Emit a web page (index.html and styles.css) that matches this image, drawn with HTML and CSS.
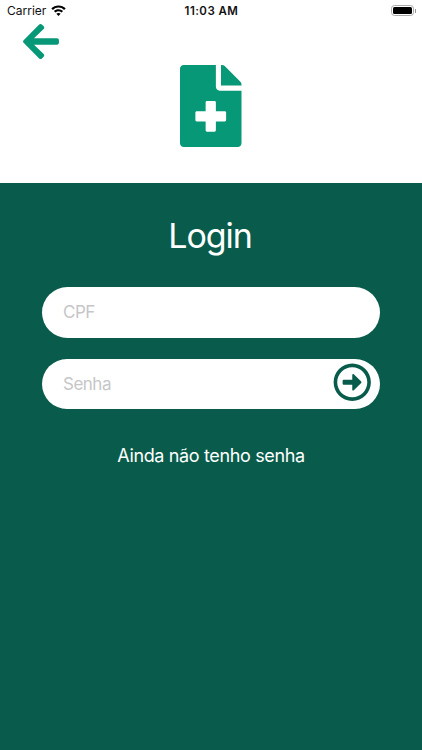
FILE: index.html
```html
<!DOCTYPE html>
<html lang="pt-BR">
<head>
<meta charset="utf-8">
<title>Login</title>
<link rel="stylesheet" href="styles.css">
</head>
<body>
<header class="top">
  <div class="status">
    <div class="carrier"><span class="carrier-name">Carrier</span>
      <svg class="wifi" viewBox="0 0 16 12"><path d="M8 0C5 0 2.300 1.100.3 3.100L2 4.800a8.500 8.500 0 0 1 12 0l1.700-1.700C13.700 1.100 11 0 8 0zM8 4.100c-1.900 0-3.600.7-4.900 1.900l1.700 1.700a4.600 4.600 0 0 1 6.400 0L12.900 6A7.100 7.100 0 0 0 8 4.100zM8 8.100c-.9 0-1.700.3-2.300.9L8 11.400 10.300 9c-.6-.6-1.400-.9-2.300-.9z"/></svg>
    </div>
    <time class="clock">11:03 AM</time>
    <div class="battery"><span class="cell"></span><span class="tip"></span></div>
  </div>
  <a class="back" aria-label="Voltar"><svg viewBox="0 0 448 512"><path d="M257.500 445.100l-22.200 22.200c-9.400 9.400-24.600 9.400-33.900 0L7 273c-9.400-9.400-9.400-24.600 0-33.900L201.400 44.700c9.400-9.400 24.600-9.400 33.900 0l22.200 22.200c9.500 9.500 9.300 25-.4 34.300L136.600 216H424c13.300 0 24 10.700 24 24v32c0 13.300-10.700 24-24 24H136.600l120.500 114.800c9.800 9.300 10 24.800.4 34.300z"/></svg></a>
  <svg class="logo" viewBox="0 0 384 512"><path d="M377 105L279.100 7c-4.500-4.500-10.600-7-17-7H256v128h128v-6.100c0-6.300-2.500-12.400-7-16.900zm-153 31V0H24C10.700 0 0 10.700 0 24v464c0 13.300 10.700 24 24 24h336c13.300 0 24-10.700 24-24V160H248c-13.200 0-24-10.800-24-24zm64 160v48c0 4.400-3.600 8-8 8h-56v56c0 4.400-3.600 8-8 8h-48c-4.400 0-8-3.600-8-8v-56h-56c-4.400 0-8-3.600-8-8v-48c0-4.400 3.600-8 8-8h56v-56c0-4.400 3.600-8 8-8h48c4.400 0 8 3.600 8 8v56h56c4.400 0 8 3.600 8 8z"/></svg>
</header>
<main class="panel">
  <h1 class="title">Login</h1>
  <div class="field"><span class="hint">CPF</span></div>
  <div class="field"><span class="hint">Senha</span>
    <svg class="go" viewBox="0 0 512 512"><path d="M504 256C504 119 393 8 256 8S8 119 8 256s111 248 248 248 248-111 248-248zm-448 0c0-110.500 89.500-200 200-200s200 89.500 200 200-89.500 200-200 200S56 366.500 56 256zm72 20v-40c0-6.600 5.400-12 12-12h116v-67c0-10.700 12.900-16 20.500-8.500l99 99c4.700 4.700 4.700 12.300 0 17l-99 99c-7.600 7.600-20.500 2.200-20.500-8.500v-67H140c-6.600 0-12-5.400-12-12z"/></svg>
  </div>
  <a class="signup">Ainda não tenho senha</a>
</main>
</body>
</html>
```
FILE: styles.css
```css
* { box-sizing: border-box; }
body {
  margin: 0;
  height: 750px;
  display: flex;
  flex-direction: column;
  font-family: Inter, "Liberation Sans", sans-serif;
  background: #fff;
}
svg { display: block; }
.top { height: 183px; flex: none; }
.status {
  height: 21px;
  padding: 0 6px 0 7px;
  display: grid;
  grid-template-columns: 1fr auto 1fr;
  align-items: center;
  color: #111;
}
.carrier { display: flex; align-items: center; gap: 5px; }
.carrier-name { font-size: 12px; line-height: 21px; }
.wifi { width: 15px; height: 12px; fill: #000; }
.clock { font-size: 11.5px; font-weight: 600; line-height: 19px; letter-spacing: 0.45px; padding-top: 2px; }
.battery { display: flex; align-items: center; justify-content: flex-end; gap: 1px; }
.cell {
  width: 23px;
  height: 11px;
  border: 1px solid #aaa;
  border-radius: 3.5px;
  padding: 1px;
  background: #000 content-box;
}
.tip { width: 1px; height: 4px; background: #999; }
.back { display: block; width: 36px; margin: -0.5px 0 0 23px; }
.back svg { width: 36px; height: 41px; fill: #079877; }
.logo { width: 61.5px; height: 82px; margin: 3.8px auto 0; fill: #079877; }
.panel {
  flex: 1;
  display: flex;
  flex-direction: column;
  align-items: center;
  background: #095c4b;
  color: #fff;
}
.title {
  margin: 31px 0 29px;
  padding-right: 2px;
  font-size: 34px;
  line-height: 44px;
  font-weight: 400;
  letter-spacing: -1.1px;
}
.field {
  width: 338px;
  height: 50.500px;
  margin-bottom: 21px;
  padding: 0 9px 0 21px;
  display: flex;
  align-items: center;
  justify-content: space-between;
  border-radius: 26px;
  background: #fff;
}
.hint { font-size: 17px; letter-spacing: -0.5px; color: #c6c6c8; }
.go { width: 38.500px; height: 38.500px; margin-top: -2.5px; fill: #095c4b; }
.signup { margin-top: 14px; font-size: 18px; line-height: 24px; letter-spacing: -0.36px; }
```
